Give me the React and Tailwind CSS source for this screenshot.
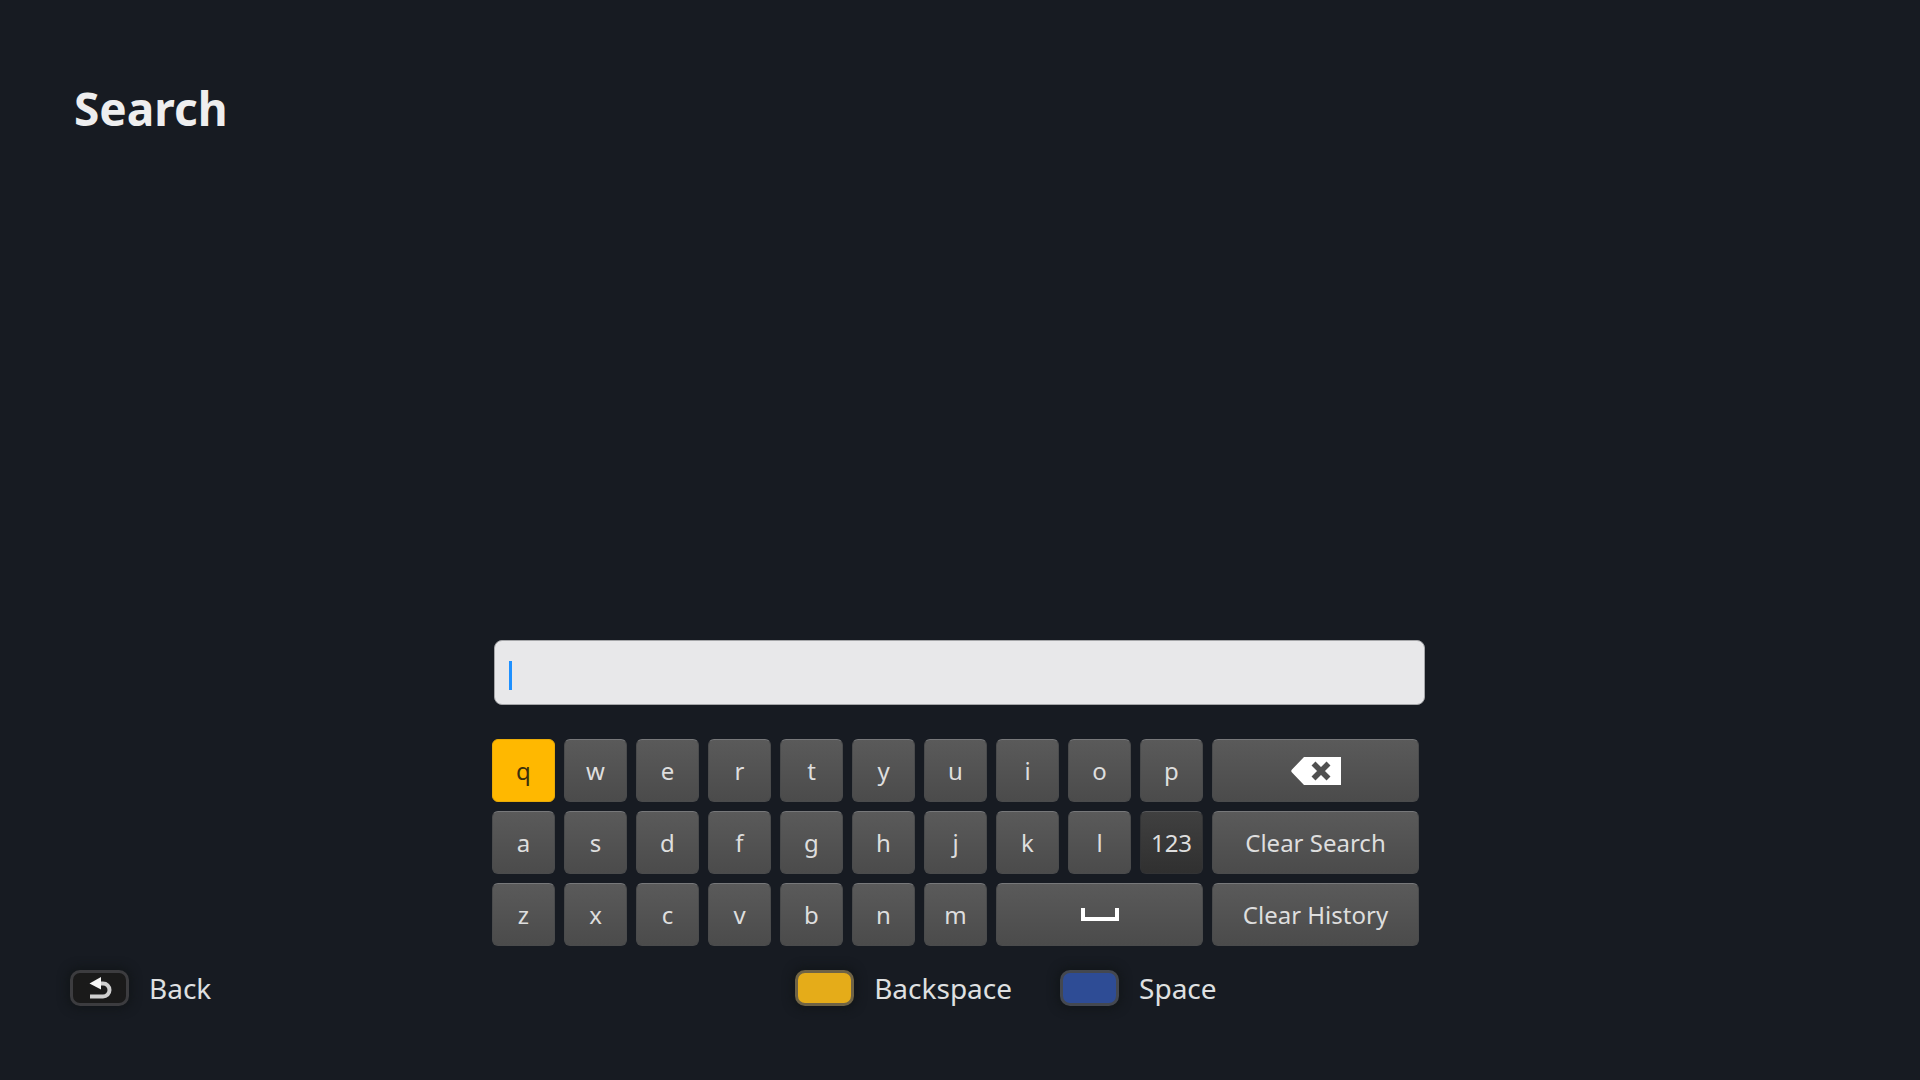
import React, { useState } from 'react';

const letterRows = [
  ["q", "w", "e", "r", "t", "y", "u", "i", "o", "p"],
  ["a", "s", "d", "f", "g", "h", "j", "k", "l"],
  ["z", "x", "c", "v", "b", "n", "m"],
];

const keyBase = "flex h-[63px] items-center justify-center rounded-[6px] border text-2xl leading-8";
const keyNormal = "border-[#4a4b4c] border-t-[#77787a] bg-linear-to-b from-[#5a5a5a] to-[#4b4b4b] text-[#dedede]";
const keyDark = "border-[#323335] border-t-[#58595b] bg-linear-to-b from-[#404040] to-[#303030] text-[#dedede]";
const keyActive = "border-[#e9ab07] bg-[#ffb800] text-[#3b2f0c]";

function Key({ variant = keyNormal, wide, label, onClick, children }) {
  return (
    <button type="button" aria-label={label} onClick={onClick} className={`${keyBase} ${variant} ${wide ? "col-span-3" : ""}`}>
      {children}
    </button>
  );
}

function Hint({ color, text, onClick, children }) {
  return (
    <button type="button" onClick={onClick} className="flex items-center gap-5 text-[28px] leading-9 text-[#dfe0e1]">
      <span className={`flex h-9 w-[59px] items-center justify-center rounded-[10px] border-3 shadow-[0_0_10px_3px_rgba(16,20,22,0.7)] ${color}`}>
        {children}
      </span>
      {text}
    </button>
  );
}

export default function App(){
  const [query, setQuery] = useState("");
  const [active, setActive] = useState("q");

  function press(letter) {
    setActive(letter);
    setQuery(query + letter);
  }

  function backspace() {
    setQuery(query.slice(0, -1));
  }

  function letters(row) {
    return row.map(letter =>
      <Key key={letter} variant={letter === active ? keyActive : keyNormal} onClick={() => press(letter)}>{letter}</Key>
    );
  }

  return (
    <div className="flex min-h-screen flex-col bg-[#171b22] font-['Noto_Sans',sans-serif]">
      <header className="px-[74px] pt-[78px]">
        <h1 className="text-[46px] leading-[60px] font-bold text-[#eeeeef]">Search</h1>
      </header>

      <main className="mx-auto mt-auto w-full max-w-[936px]">
        <div className="pr-[3px] pl-[2px]">
          <div className="flex h-[65px] items-center rounded-lg border border-[#a5a6a9] bg-[#e8e8ea] px-3.5">
            {query && <span className="text-2xl whitespace-pre text-[#222222]">{query}</span>}
            <span className="mt-1.5 h-[29px] w-[3px] bg-[#1e90ff]"></span>
            <input type="text" aria-label="Search" value={query} onChange={event => setQuery(event.target.value)} className="w-0 grow bg-transparent text-2xl text-transparent caret-transparent outline-none" />
          </div>
        </div>

        <div className="mt-[34px] grid grid-cols-13 gap-[9px] pr-[9px]">
          {letters(letterRows[0])}
          <Key wide label="Delete" onClick={backspace}>
            <svg className="h-7 w-[50px]" viewBox="0 0 50 28" aria-hidden="true">
              <path fill="#ffffff" d="M13 0H50V28H13L1 15.500Q-.5 14 1 12.500Z"/>
              <path stroke="#505050" strokeWidth="5.600" d="M22.500 6.500 37.500 21.500M37.500 6.500 22.500 21.500"/>
            </svg>
          </Key>
          {letters(letterRows[1])}
          <Key variant={keyDark}>123</Key>
          <Key wide onClick={() => setQuery("")}>Clear Search</Key>
          {letters(letterRows[2])}
          <Key wide label="Space" onClick={() => setQuery(query + " ")}>
            <svg className="h-[13px] w-[38px]" viewBox="0 0 38 13" aria-hidden="true">
              <path fill="none" stroke="#ffffff" strokeWidth="4" d="M2 0V11H36V0"/>
            </svg>
          </Key>
          <Key wide>Clear History</Key>
        </div>
      </main>

      <footer className="mt-6 grid grid-cols-[11fr_16fr] px-[70px] pb-[74px]">
        <div className="flex">
          <Hint text="Back" color="border-[#3c3c3f] bg-[#1a1a1a]">
            <svg className="h-6 w-6" viewBox="0 0 24 24" aria-hidden="true">
              <path fill="none" stroke="#cfcfcf" strokeWidth="4" d="M11 7.500H15A6.300 6.300 0 0 1 15 20.500H2"/>
              <path fill="#f6f6f6" d="M1.500 7.500 13 1V13.500Z"/>
            </svg>
          </Hint>
        </div>
        <div className="flex gap-12">
          <Hint text="Backspace" color="border-[#6f6345] bg-[#e5ac19]" onClick={backspace} />
          <Hint text="Space" color="border-[#444850] bg-[#2e4c95]" onClick={() => setQuery(query + " ")} />
        </div>
      </footer>
    </div>
  );
}
